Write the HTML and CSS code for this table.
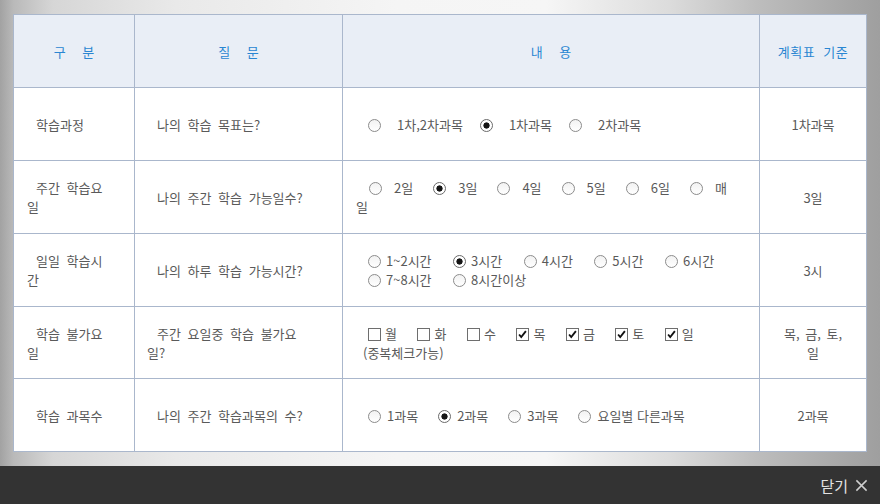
FILE: index.html
```html
<!DOCTYPE html>
<html lang="ko">
<head>
<meta charset="utf-8">
<title>학습 계획표</title>
<link rel="stylesheet" href="styles.css">
</head>
<body>
<div class="page">
  <table class="plan">
    <colgroup><col class="c1"><col class="c2"><col class="c3"><col class="c4"></colgroup>
    <thead>
      <tr>
        <th class="sp">구 분</th>
        <th class="sp">질 문</th>
        <th class="sp">내 용</th>
        <th class="std-h">계획표 기준</th>
      </tr>
    </thead>
    <tbody>
      <tr class="r1">
        <td class="cat">학습과정</td>
        <td class="q">나의 학습 목표는?</td>
        <td class="opts o1"><label class="opt"><i class="rd"></i>1차,2차과목</label><label class="opt"><i class="rd on"></i>1차과목</label><label class="opt"><i class="rd"></i>2차과목</label></td>
        <td class="std">1차과목</td>
      </tr>
      <tr class="r2">
        <td class="cat">주간 학습요일</td>
        <td class="q">나의 주간 학습 가능일수?</td>
        <td class="opts o2"><label class="opt first"><i class="rd"></i>2일</label><label class="opt"><i class="rd on"></i>3일</label><label class="opt"><i class="rd"></i>4일</label><label class="opt"><i class="rd"></i>5일</label><label class="opt"><i class="rd"></i>6일</label><label class="opt last"><i class="rd"></i><span class="syl">매</span><span class="syl">일</span></label></td>
        <td class="std">3일</td>
      </tr>
      <tr class="r3">
        <td class="cat">일일 학습시간</td>
        <td class="q">나의 하루 학습 가능시간?</td>
        <td class="opts o3"><label class="opt"><i class="rd"></i>1~2시간</label><label class="opt"><i class="rd on"></i>3시간</label><label class="opt"><i class="rd"></i>4시간</label><label class="opt"><i class="rd"></i>5시간</label><label class="opt"><i class="rd"></i>6시간</label><label class="opt"><i class="rd"></i>7~8시간</label><label class="opt"><i class="rd"></i>8시간이상</label></td>
        <td class="std">3시</td>
      </tr>
      <tr class="r4">
        <td class="cat">학습 불가요일</td>
        <td class="q">주간 요일중 학습 불가요일?</td>
        <td class="opts o4">
          <div class="days"><label class="opt"><i class="cb"></i>월</label><label class="opt"><i class="cb"></i>화</label><label class="opt"><i class="cb"></i>수</label><label class="opt"><i class="cb on"><svg viewBox="0 0 13 13" width="11" height="11"><polyline points="2.5,6.5 5,9.5 10.5,2.5" fill="none" stroke="#111" stroke-width="2.2"/></svg></i>목</label><label class="opt"><i class="cb on"><svg viewBox="0 0 13 13" width="11" height="11"><polyline points="2.5,6.5 5,9.5 10.5,2.5" fill="none" stroke="#111" stroke-width="2.2"/></svg></i>금</label><label class="opt"><i class="cb on"><svg viewBox="0 0 13 13" width="11" height="11"><polyline points="2.5,6.5 5,9.5 10.5,2.5" fill="none" stroke="#111" stroke-width="2.2"/></svg></i>토</label><label class="opt"><i class="cb on"><svg viewBox="0 0 13 13" width="11" height="11"><polyline points="2.5,6.5 5,9.5 10.5,2.5" fill="none" stroke="#111" stroke-width="2.2"/></svg></i>일</label></div>
          <div class="note">(중복체크가능)</div>
        </td>
        <td class="std">목, 금, 토, 일</td>
      </tr>
      <tr class="r5">
        <td class="cat">학습 과목수</td>
        <td class="q">나의 주간 학습과목의 수?</td>
        <td class="opts o5"><label class="opt"><i class="rd"></i>1과목</label><label class="opt"><i class="rd on"></i>2과목</label><label class="opt"><i class="rd"></i>3과목</label><label class="opt"><i class="rd"></i>요일별 다른과목</label></td>
        <td class="std">2과목</td>
      </tr>
    </tbody>
  </table>
</div>
<footer class="bar">
  <button class="close" type="button">닫기<svg class="x" viewBox="0 0 14 14" width="13" height="13"><path d="M1.5 1.5 L12.5 12.5 M12.5 1.5 L1.5 12.5" stroke="#cfcfcf" stroke-width="1.6" fill="none"/></svg></button>
</footer>
</body>
</html>
```

FILE: styles.css
```css
html, body {
  margin: 0;
  padding: 0;
}
body {
  width: 880px;
  height: 504px;
  overflow: hidden;
  font-family: "Noto Sans CJK KR", "Noto Sans", sans-serif;
  font-size: 13px;
  color: #5a5a5a;
  background: #333;
}
.page {
  height: 466px;
  box-sizing: border-box;
  padding: 14px 0 0 13px;
  background: linear-gradient(90deg, #a2a2a2 0%, #b9b9b9 1.5%, #d6d6d6 6%, #e9e9e9 20%, #f5f5f5 45%, #f6f6f6 62%, #dcdcdc 76%, #bdbdbd 86%, #a7a7a7 96%, #9f9f9f 100%);
}
.plan {
  width: 853px;
  table-layout: fixed;
  border-collapse: collapse;
  background: #fff;
  line-height: 19px;
}
.c1 { width: 121px; }
.c2 { width: 208px; }
.c3 { width: 417px; }
.c4 { width: 107px; }
.plan th, .plan td {
  border: 1px solid #aab7cc;
  padding: 0;
  vertical-align: middle;
}
.plan thead tr { height: 73px; }
.plan th {
  background: #e9eef6;
  color: #2a86d2;
  font-weight: normal;
  text-align: center;
}
.plan th.sp { word-spacing: 13px; }
.plan th.std-h { word-spacing: 4px; letter-spacing: 0.5px; }
.r1, .r2, .r3 { height: 73px; }
.r4 { height: 72px; }
.r5 { height: 72px; }
.r5 td { height: 72px; }

.cat {
  text-align: left;
  padding: 0 25px 0 13px !important;
  text-indent: 9px;
  word-spacing: 3px;
}
.q {
  text-align: left;
  padding: 0 34px 0 12px !important;
  text-indent: 10px;
  word-spacing: 3px;
}
.std {
  text-align: center;
  padding: 0 21px !important;
  word-spacing: 2px;
}
.opts {
  text-align: left;
  padding: 0 24px 0 13px !important;
}
.opt {
  white-space: nowrap;
}
.rd, .cb {
  display: inline-block;
  width: 13px;
  height: 13px;
  box-sizing: border-box;
  vertical-align: -2px;
  background: #fff;
}
.rd {
  border: 1px solid #8c8c8c;
  border-radius: 50%;
  background: linear-gradient(#f2f2f2, #fff);
}
.rd.on {
  border-color: #6a6a6a;
  background: radial-gradient(circle, #151515 0 2.8px, #fff 3.4px);
}
.cb {
  border: 1px solid #6e6e6e;
  text-align: center;
  line-height: 0;
}
.cb svg {
  display: block;
  margin: 0;
}

/* row 1 */
.o1 { padding-left: 25px !important; }
.o1 .rd { margin-right: 16px; }
.o1 .opt { margin-right: 17px; }

/* row 2 */
.o2 { padding-right: 26px !important; }
.o2 .opt { margin-right: 20px; }
.o2 .opt.first { margin-left: 13px; }
.o2 .rd { margin-right: 12px; }
.o2 .opt.last { white-space: normal; margin-right: 0; }

/* row 3 */
.o3 { padding-left: 25px !important; padding-right: 8px !important; }
.o3 .rd { margin-right: 5px; }
.o3 .opt { margin-right: 21.5px; }

/* row 4 */
.o4 { padding-left: 20px !important; }
.days { padding-left: 5px; }
.o4 .cb { margin-right: 4px; }
.o4 .opt { margin-right: 20.5px; }

/* row 5 */
.o5 { padding-left: 25px !important; }
.o5 .rd { margin-right: 6px; }
.o5 .opt { margin-right: 20px; }

.bar {
  height: 38px;
  background: #333;
  display: flex;
  justify-content: flex-end;
  align-items: center;
  padding-right: 12px;
}
.close {
  background: none;
  border: 0;
  padding: 0;
  color: #e2e2e2;
  font-family: "Noto Sans CJK KR", "Noto Sans", sans-serif;
  font-size: 15px;
  display: flex;
  align-items: center;
  gap: 7px;
  cursor: pointer;
}
.close .x { display: block; }
```
